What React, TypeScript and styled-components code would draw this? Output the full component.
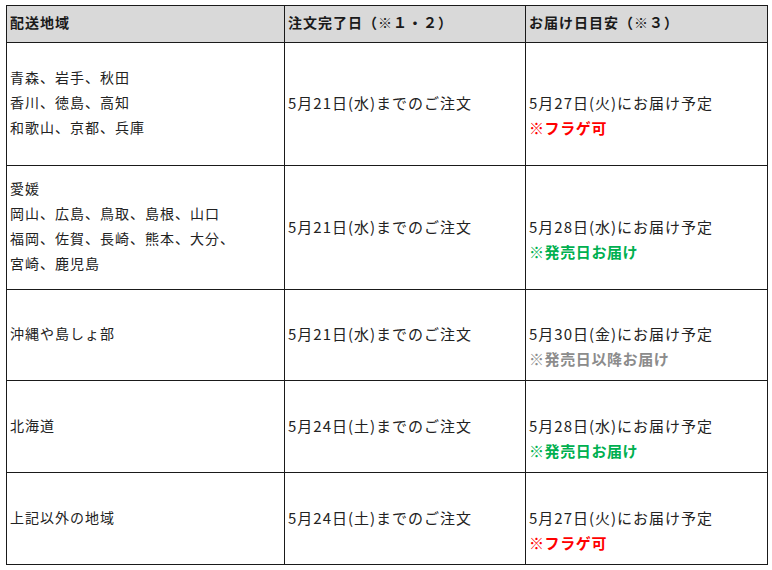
import * as React from "react";
import styled, { createGlobalStyle } from "styled-components";

const GlobalStyle = createGlobalStyle`
  html, body {
    margin: 0;
    padding: 0;
    background: #ffffff;
  }
  body {
    font-family: "Noto Sans CJK JP", "Noto Sans", sans-serif;
    color: #222222;
  }
`;

type Note = "flag" | "release" | "after";

type Row = {
  areas: string[];
  deadline: string;
  delivery: string;
  note: Note;
  height: number;
};

const rows: Row[] = [
  {
    areas: ["青森、岩手、秋田", "香川、徳島、高知", "和歌山、京都、兵庫"],
    deadline: "5月21日(水)までのご注文",
    delivery: "5月27日(火)にお届け予定",
    note: "flag",
    height: 123,
  },
  {
    areas: ["愛媛", "岡山、広島、鳥取、島根、山口", "福岡、佐賀、長崎、熊本、大分、", "宮崎、鹿児島"],
    deadline: "5月21日(水)までのご注文",
    delivery: "5月28日(水)にお届け予定",
    note: "release",
    height: 124,
  },
  {
    areas: ["沖縄や島しょ部"],
    deadline: "5月21日(水)までのご注文",
    delivery: "5月30日(金)にお届け予定",
    note: "after",
    height: 91,
  },
  {
    areas: ["北海道"],
    deadline: "5月24日(土)までのご注文",
    delivery: "5月28日(水)にお届け予定",
    note: "release",
    height: 92,
  },
  {
    areas: ["上記以外の地域"],
    deadline: "5月24日(土)までのご注文",
    delivery: "5月27日(火)にお届け予定",
    note: "flag",
    height: 92,
  },
];

const noteText: Record<Note, string> = {
  flag: "※フラゲ可",
  release: "※発売日お届け",
  after: "※発売日以降お届け",
};

const noteColor: Record<Note, string> = {
  flag: "#ff0000",
  release: "#00b050",
  after: "#8c8c8c",
};

const Page = styled.div`
  padding: 5px 0 0 6px;
`;

const Table = styled.table`
  border-collapse: collapse;
  table-layout: fixed;
  width: 761px;
  font-size: 14px;
  line-height: 25px;
`;

const HeadCell = styled.th`
  background: #d9d9d9;
  border: 1px solid #1a1a1a;
  height: 33px;
  padding: 0 3px 3px;
  text-align: left;
  font-weight: 700;
  font-size: 14px;
  letter-spacing: 1px;
  color: #1a1a1a;
  vertical-align: middle;
`;

const Cell = styled.td<{ $height: number }>`
  border: 1px solid #1a1a1a;
  height: ${(p) => p.$height - 4}px;
  padding: 0 3px 3px;
  vertical-align: middle;
  white-space: nowrap;
`;

const AreaLine = styled.div`
  font-size: 14px;
  letter-spacing: 1px;
`;

const MainText = styled.div`
  font-size: 15px;
  letter-spacing: 1px;
`;

const Spacer = styled.div`
  height: 25px;
`;

const NoteText = styled.div<{ $color: string }>`
  font-size: 15px;
  font-weight: 700;
  letter-spacing: 0.6px;
  color: ${(p) => p.$color};
`;

export default function App() {
  return (
    <Page>
      <GlobalStyle />
      <Table>
        <colgroup>
          <col style={{ width: 278 }} />
          <col style={{ width: 241 }} />
          <col style={{ width: 242 }} />
        </colgroup>
        <thead>
          <tr>
            <HeadCell>配送地域</HeadCell>
            <HeadCell>注文完了日（※１・２）</HeadCell>
            <HeadCell>お届け日目安（※３）</HeadCell>
          </tr>
        </thead>
        <tbody>
          {rows.map((r, i) => (
            <tr key={i}>
              <Cell $height={r.height}>
                {r.areas.map((a) => (
                  <AreaLine key={a}>{a}</AreaLine>
                ))}
              </Cell>
              <Cell $height={r.height}>
                <MainText>{r.deadline}</MainText>
              </Cell>
              <Cell $height={r.height}>
                <Spacer />
                <MainText>{r.delivery}</MainText>
                <NoteText $color={noteColor[r.note]}>{noteText[r.note]}</NoteText>
              </Cell>
            </tr>
          ))}
        </tbody>
      </Table>
    </Page>
  );
}
